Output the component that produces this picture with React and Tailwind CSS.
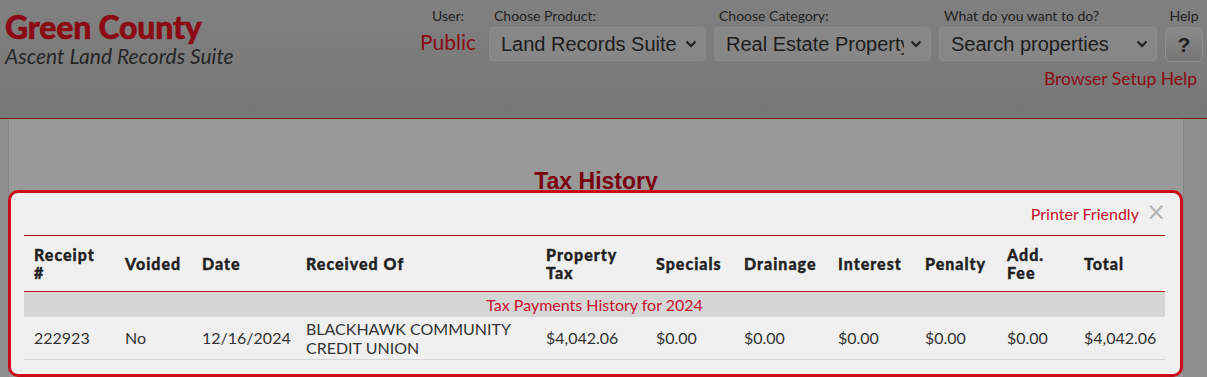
import React from "react";

const lato = { fontFamily: "Lato, 'Open Sans', sans-serif" };

function Chevron() {
  return (
    <svg width="12" height="8" viewBox="0 0 12 8" className="shrink-0">
      <path d="M1.5 1.5 L6 6 L10.5 1.5" fill="none" stroke="#1e1e1e" strokeWidth="2" />
    </svg>
  );
}

function FakeSelect({ text, width }) {
  return (
    <div
      className={`mt-[2px] h-[34px] ${width} flex items-center rounded-[4px] border border-[#8c8c8c] bg-[#878787] pl-[11px] pr-[8px]`}
    >
      <span className="flex-1 min-w-0 mr-[6px] text-[20px] text-[#1c1c1c] whitespace-nowrap overflow-hidden" style={{ fontFamily: "'Liberation Sans', Arial, sans-serif" }}>
        {text}
      </span>
      <Chevron />
    </div>
  );
}

const cols = [
  { h: ["Receipt", "#"], w: "w-[91px]" },
  { h: ["Voided"], w: "w-[77px]" },
  { h: ["Date"], w: "w-[104px]" },
  { h: ["Received Of"], w: "w-[240px]" },
  { h: ["Property", "Tax"], w: "w-[110px]" },
  { h: ["Specials"], w: "w-[88px]" },
  { h: ["Drainage"], w: "w-[94px]" },
  { h: ["Interest"], w: "w-[87px]" },
  { h: ["Penalty"], w: "w-[82px]" },
  { h: ["Add.", "Fee"], w: "w-[77px]" },
  { h: ["Total"], w: "w-[91px]" },
];

const row = ["222923", "No", "12/16/2024", "BLACKHAWK COMMUNITY CREDIT UNION", "$4,042.06", "$0.00", "$0.00", "$0.00", "$0.00", "$0.00", "$4,042.06"];

export default function App() {
  return (
    <div className="relative w-[1207px] h-[377px] overflow-hidden bg-[#999999]" style={lato}>
      {/* Header */}
      <header className="h-[119px] border-b border-[#7a0a0e] bg-gradient-to-b from-[#808080] to-[#777777] flex justify-between">
        <div className="pl-[5px] pt-[10px]">
          <div className="text-[32px] leading-[34px] font-black text-[#8b0a14] tracking-[-0.2px] [-webkit-text-stroke:0.5px_#8b0a14]">Green County</div>
          <div className="text-[21px] leading-[24px] italic text-[#262626]">Ascent Land Records Suite</div>
        </div>
        <div className="flex flex-col items-end pr-[4px]">
          <div className="flex items-start pt-[6px]">
            <div className="w-[56px] flex flex-col items-center">
              <div className="text-[14px] leading-[19px] text-[#222]">User:</div>
              <div className="h-[34px] flex items-center text-[21px] text-[#8b0a14]">Public</div>
            </div>
            <div className="ml-[13px] flex flex-col">
              <div className="pl-[5px] text-[14px] leading-[19px] text-[#222]">Choose Product:</div>
              <FakeSelect text="Land Records Suite" width="w-[217px]" />
            </div>
            <div className="ml-[8px] flex flex-col">
              <div className="pl-[5px] text-[14px] leading-[19px] text-[#222]">Choose Category:</div>
              <FakeSelect text="Real Estate Property" width="w-[217px]" />
            </div>
            <div className="ml-[8px] flex flex-col">
              <div className="pl-[5px] text-[14px] leading-[19px] text-[#222]">What do you want to do?</div>
              <FakeSelect text="Search properties" width="w-[218px]" />
            </div>
            <div className="ml-[8px] flex flex-col items-center">
              <div className="text-[14px] leading-[19px] text-[#222]">Help</div>
              <div className="mt-[2px] w-[38px] h-[35px] rounded-[6px] border border-[#8e8e8e] bg-gradient-to-b from-[#8a8a8a] to-[#767676] flex items-center justify-center text-[21px] font-bold text-[#1e1e1e]" style={{ fontFamily: "'Liberation Sans', Arial, sans-serif" }}>
                ?
              </div>
            </div>
          </div>
          <div className="mt-[6px] pr-[6px] text-[17.5px] leading-[22px] text-[#8b0a14]">Browser Setup Help</div>
        </div>
      </header>

      {/* Page body behind overlay */}
      <div className="flex h-[258px]">
        <div className="w-[9px] bg-[#8f8f8f] border-r border-[#868686]" />
        <div className="flex-1 flex justify-center pt-[45px]">
          <div className="text-[23px] font-bold text-[#7a0010]" style={{ fontFamily: "'Liberation Sans', Arial, sans-serif" }}>
            Tax History
          </div>
        </div>
        <div className="w-[24px] bg-[#8f8f8f] border-l border-[#868686]" />
      </div>

      {/* Modal */}
      <div className="absolute left-[8px] top-[190px] w-[1175px] h-[187px] rounded-[10px] border-[3px] border-[#c80a1a] bg-[#f0f0f0] px-[13px]">
        <div className="flex justify-end items-center h-[42px] pr-[1px]">
          <span className="text-[16px] text-[#c8102e]">Printer Friendly</span>
          <span className="ml-[7px] text-[24px] leading-[20px] text-[#b4b4b4] -mt-[4px]" style={{ fontFamily: "'DejaVu Sans', sans-serif" }}>×</span>
        </div>
        <table className="table-fixed border-collapse w-[1141px] border-t border-[#a00010]">
          <thead>
            <tr className="h-[56px] border-b border-[#c8102e]">
              {cols.map((c, i) => (
                <th key={i} className={`${c.w} text-left align-middle font-black text-[16px] leading-[18px] tracking-[1px] text-[#222] [-webkit-text-stroke:0.35px_#222] pl-[10px] pr-[1px]`}>
                  {c.h.map((l, j) => (
                    <div key={j}>{l}</div>
                  ))}
                </th>
              ))}
            </tr>
          </thead>
          <tbody>
            <tr className="h-[25px] bg-[#d6d6d6]">
              <td colSpan={11} className="text-center text-[16px] text-[#c8102e] leading-[19px]">
                Tax Payments History for 2024
              </td>
            </tr>
            <tr className="h-[43px] border-b border-[#d6d6d6]">
              {row.map((v, i) => (
                <td key={i} className="pl-[10px] pr-[4px] align-middle text-[16px] leading-[19px] text-[#333]">
                  {v}
                </td>
              ))}
            </tr>
          </tbody>
        </table>
      </div>
    </div>
  );
}
